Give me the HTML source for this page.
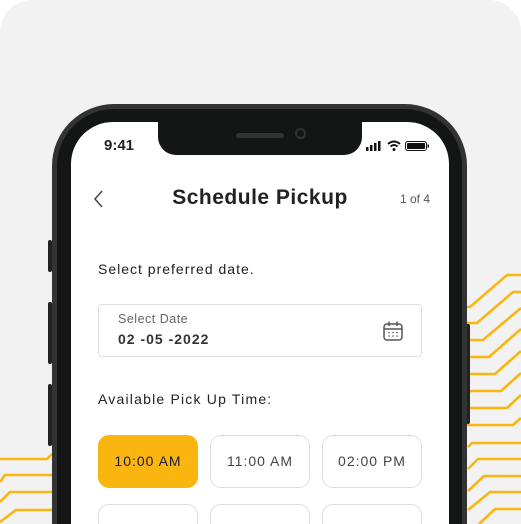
<!DOCTYPE html><html><head><style>
html,body{margin:0;width:521px;height:524px;overflow:hidden}
body{background:#fff;font-family:"Liberation Sans",sans-serif;position:relative}
.card{position:absolute;left:0;top:0;width:521px;height:524px;background:#f2f2f2;border-radius:32px 32px 0 0}
.phone{position:absolute;left:52px;top:104px;width:415px;height:420px;background:#333;border-radius:62px 62px 0 0}
.inner{position:absolute;left:5px;top:5px;right:5px;bottom:0;background:#141616;border-radius:57px 57px 0 0}
.screen{position:absolute;left:71px;top:122px;width:378px;height:402px;background:#fff;border-radius:42px 42px 0 0;overflow:hidden}
.notch{position:absolute;left:87px;top:0;width:204px;height:33px;background:#141616;border-radius:0 0 18px 18px}
.t{position:absolute;color:#222;white-space:nowrap}
.btn{position:absolute;width:100px;height:53px;border:1px solid #ddd;border-radius:11px;box-sizing:border-box;text-align:center;line-height:51px;font-size:14px;color:#444;letter-spacing:1px}
.side{position:absolute;background:#222;width:4px;border-radius:2px}
</style></head><body>
<div class="card"></div>
<svg style="position:absolute;left:0;top:0" width="521" height="524">
<g stroke="#FBB50F" stroke-width="2.6" fill="none">
<path d="M467 307 H470 L507 275 H521"/>
<path d="M467 323 H477 L513 292 H521"/>
<path d="M467 340 H483 L521 308"/>
<path d="M467 357 H489 L521 329"/>
<path d="M467 374 H495 L521 351"/>
<path d="M467 391 H501 L521 373"/>
<path d="M467 408 H507 L521 395"/>
<path d="M467 425 H513 L521 418"/>
<path d="M468 447 L472 443 H521"/>
<path d="M468 469 L478 459 H521"/>
<path d="M468 491 L484 476 H521"/>
<path d="M468 510 L490 492 H521"/>
<path d="M479 524 L495 509 H521"/>
<path d="M0 459 H47 L52 454"/>
<path d="M0 482 L5 475 H52"/>
<path d="M0 502 L10 492 H52"/>
<path d="M0 522 L16 510 H52"/>
</g></svg>
<div class="side" style="left:48px;top:240px;height:32px"></div>
<div class="side" style="left:48px;top:302px;height:62px"></div>
<div class="side" style="left:48px;top:384px;height:62px"></div>
<div class="side" style="left:466px;top:324px;height:100px"></div>
<div class="phone"><div class="inner"></div></div>
<div class="screen">
<div class="notch"><div style="position:absolute;left:78px;top:11px;width:48px;height:5px;border-radius:3px;background:#333"></div><div style="position:absolute;left:137px;top:6px;width:11px;height:11px;border-radius:50%;border:2px solid #333;box-sizing:border-box"></div></div>
<div class="t" style="left:33px;top:15px;font-size:15px;font-weight:bold">9:41</div>
<svg style="position:absolute;left:295px;top:18px" width="70" height="12">
<rect x="0" y="7" width="2.5" height="4" fill="#111"/><rect x="4" y="5" width="2.5" height="6" fill="#111"/><rect x="8" y="3" width="2.5" height="8" fill="#111"/><rect x="12" y="1" width="2.5" height="10" fill="#111"/>
<path d="M22 4 Q28 -1 34 4" stroke="#111" stroke-width="2" fill="none"/><path d="M24.5 6.5 Q28 3.5 31.5 6.5" stroke="#111" stroke-width="2" fill="none"/><circle cx="28" cy="9.5" r="1.5" fill="#111"/>
<rect x="39.5" y="1.5" width="21" height="9" rx="2.5" stroke="#111" fill="none"/><rect x="41" y="3" width="18" height="6" rx="1" fill="#111"/><rect x="61.5" y="4.5" width="1.5" height="3" fill="#111"/>
</svg>
<svg style="position:absolute;left:22px;top:68px" width="12" height="18"><path d="M9 1 L2 9 L9 17" stroke="#444" stroke-width="1.5" fill="none"/></svg>
<div class="t" style="left:0;width:378px;text-align:center;top:64px;font-size:21px;font-weight:bold;letter-spacing:0.5px">Schedule Pickup</div>
<div class="t" style="left:329px;top:70px;font-size:12px;color:#555">1 of 4</div>
<div class="t" style="left:27px;top:139px;font-size:14px;letter-spacing:1px">Select preferred date.</div>
<div style="position:absolute;left:27px;top:182px;width:324px;height:53px;border:1px solid #ddd;border-radius:4px;box-sizing:border-box"></div>
<div class="t" style="left:47px;top:190px;font-size:12.5px;color:#666;letter-spacing:0.5px">Select Date</div>
<div class="t" style="left:47px;top:209px;font-size:14px;letter-spacing:1px;font-weight:bold;color:#333">02 -05 -2022</div>
<svg style="position:absolute;left:311px;top:198px" width="22" height="22"><rect x="2" y="4" width="18" height="16" rx="3" stroke="#555" stroke-width="1.5" fill="none"/><path d="M2 9 H20 M7 1.5 V6 M15 1.5 V6" stroke="#555" stroke-width="1.5"/><g fill="#555"><circle cx="7" cy="12.5" r=".8"/><circle cx="11" cy="12.5" r=".8"/><circle cx="15" cy="12.5" r=".8"/><circle cx="7" cy="16" r=".8"/><circle cx="11" cy="16" r=".8"/><circle cx="15" cy="16" r=".8"/></g></svg>
<div class="t" style="left:27px;top:269px;font-size:14px;letter-spacing:1.2px">Available Pick Up Time:</div>
<div class="btn" style="left:27px;top:313px;background:#FBB50F;border-color:#FBB50F;color:#1a1a3a">10:00 AM</div>
<div class="btn" style="left:139px;top:313px">11:00 AM</div>
<div class="btn" style="left:251px;top:313px">02:00 PM</div>
<div class="btn" style="left:27px;top:382px"></div>
<div class="btn" style="left:139px;top:382px"></div>
<div class="btn" style="left:251px;top:382px"></div>
</div>
</body></html>
